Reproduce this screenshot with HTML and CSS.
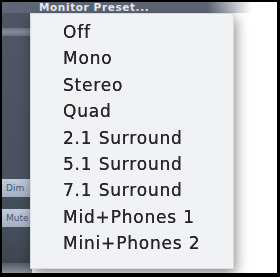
FILE: index.html
```html
<!DOCTYPE html>
<html>
<head>
<meta charset="utf-8">
<link rel="stylesheet" href="styles.css">
</head>
<body>
<div class="frame">
  <div class="shot">
    <div class="header"><span class="title">Monitor Preset...</span></div>
    <div class="body">
      <div class="side">
        <div class="band"></div>
        <div class="spacer"></div>
        <div class="btn">Dim</div>
        <div class="gap"></div>
        <div class="btn">Mute</div>
        <div class="spacer2"></div>
        <div class="foot"></div>
      </div>
    </div>
    <ul class="menu">
      <li>Off</li>
      <li>Mono</li>
      <li>Stereo</li>
      <li>Quad</li>
      <li>2.1 Surround</li>
      <li>5.1 Surround</li>
      <li>7.1 Surround</li>
      <li>Mid+Phones 1</li>
      <li>Mini+Phones 2</li>
    </ul>
  </div>
</div>
</body>
</html>
```
FILE: styles.css
```css
html, body {
  margin: 0;
  padding: 0;
  background: #000;
}
.frame {
  width: 280px;
  height: 277px;
  box-sizing: border-box;
  border-style: solid;
  border-color: #000;
  border-width: 2px 3px 4px 2px;
  background: #fff;
  overflow: hidden;
}
.shot {
  position: relative;
  width: 100%;
  height: 100%;
  display: flex;
  flex-direction: column;
  filter: blur(0.35px);
}
.header {
  height: 11px;
  background: linear-gradient(to right, #5f6776 0, #5c6473 205px, #c9ccd2 235px, #fff 250px);
  padding-left: 37px;
  overflow: hidden;
}
.title {
  display: block;
  font-family: "DejaVu Sans", sans-serif;
  font-weight: bold;
  font-size: 10.5px;
  line-height: 11px;
  color: #e8ecf2;
  letter-spacing: 0.6px;
  white-space: nowrap;
}
.body {
  flex: 1;
  display: flex;
}
.side {
  width: 30px;
  display: flex;
  flex-direction: column;
  background: #4d5563;
}
.band {
  height: 8px;
  margin-top: 15px;
  background: linear-gradient(#6b7280, #858b96, #6b7280);
}
.spacer {
  height: 143px;
  background: linear-gradient(#4f5765, #49515f);
}
.btn {
  height: 18px;
  background: linear-gradient(#c0cbdb, #a4b1c3);
  font-family: "DejaVu Sans", sans-serif;
  font-size: 9px;
  line-height: 18px;
  color: #4a5878;
  padding-left: 4px;
  overflow: hidden;
}
.gap {
  height: 12px;
  background: #454d5a;
}
.spacer2 {
  flex: 1;
  background: linear-gradient(#474f5c, #3e4551);
}
.foot {
  height: 10px;
  background: linear-gradient(#555b66, #8d939b);
}
.menu {
  position: absolute;
  left: 28px;
  top: 11px;
  width: 204px;
  height: 256px;
  box-sizing: border-box;
  margin: 0;
  padding: 5px 0 0 0;
  list-style: none;
  background: #f1f2f4;
  border: 1px solid #d9dadd;
  box-shadow: 2px 5px 12px rgba(0, 0, 0, 0.45);
}
.menu li {
  height: 26.4px;
  line-height: 26.4px;
  padding-left: 32px;
  font-family: "DejaVu Sans", sans-serif;
  font-size: 17px;
  letter-spacing: 0.8px;
  color: #262628;
  text-shadow: 0 0 0.4px #262628;
}
```
